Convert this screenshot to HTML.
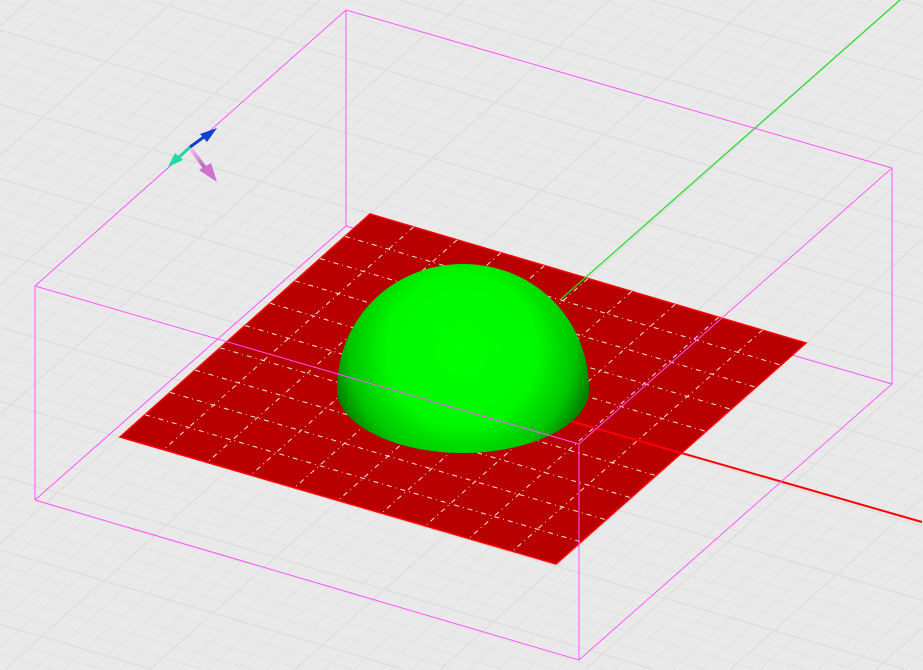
<!DOCTYPE html>
<html><head><meta charset="utf-8"><style>
html,body{margin:0;padding:0;background:#e9e9e9;overflow:hidden;width:923px;height:670px}
svg{display:block;position:absolute;left:0;top:0}
</style></head><body>
<svg id="s" width="923" height="670" viewBox="0 0 923 670" xmlns="http://www.w3.org/2000/svg" overflow="hidden">
<defs>
<radialGradient id="g" cx="462" cy="350" r="138" gradientUnits="userSpaceOnUse">
<stop offset="0" stop-color="#00ff00"/>
<stop offset="0.55" stop-color="#00f800"/>
<stop offset="0.82" stop-color="#00c400"/>
<stop offset="1" stop-color="#006e00"/>
</radialGradient>
<linearGradient id="pk" x1="0" y1="0" x2="1" y2="1"><stop offset="0" stop-color="#f4c0f0"/><stop offset="1" stop-color="#b060b0"/></linearGradient>
</defs>
<rect width="923" height="670" fill="#e9e9e9"/>
<g id="bg" stroke="#dedede" stroke-width="0.7"></g>
<g stroke="#ff55ff" stroke-width="1" fill="none">
<line x1="346" y1="10" x2="346" y2="226"/>
<line x1="346" y1="226" x2="35" y2="500"/>
<line x1="346" y1="226" x2="892" y2="384"/>
</g>
<polygon points="370,214 806,343 556,564 120,437" fill="#b80000" stroke="#ff0000" stroke-width="1.5"/>
<g id="pg" stroke="#ffffff" stroke-width="1" stroke-dasharray="5,4,1,4" opacity="0.9"></g>
<line x1="560" y1="300" x2="900" y2="0" stroke="#22dd22" stroke-width="1.2"/>
<line x1="570" y1="421" x2="922" y2="522" stroke="#ff0000" stroke-width="2"/>
<path d="M337,390 C337,318 393,264 463,264 C533,264 589,318 589,390 C589,425 530,453 463,453 C396,453 337,425 337,390 Z" fill="url(#g)"/>
<g stroke="#ff55ff" stroke-width="1" fill="none">
<polyline points="35,500 35,286 346,10 892,168 892,384 579,660 35,500"/>
<line x1="35" y1="286" x2="579" y2="444"/>
<line x1="579" y1="444" x2="892" y2="168"/>
<line x1="579" y1="444" x2="579" y2="660"/>
</g>
<g>
<line x1="190" y1="147" x2="208" y2="134" stroke="#1040c0" stroke-width="3"/>
<polygon points="217,128 200,134 207,142" fill="#1040d0"/>
<line x1="190" y1="147" x2="178" y2="158" stroke="#30d0a0" stroke-width="3"/>
<polygon points="168,167 175,153 183,160" fill="#20d8a8"/>
<line x1="191" y1="149" x2="205" y2="168" stroke="url(#pk)" stroke-width="4"/>
<polygon points="217,182 199,170 211,163" fill="#d070d0"/>
</g>
</svg>
<script>
(function(){
var ns="http://www.w3.org/2000/svg";
var W=922,H=669;
function clip(x1,y1,x2,y2){
 var dx=x2-x1,dy=y2-y1,t0=0,t1=1;
 var p=[-dx,dx,-dy,dy],q=[x1,W-x1,y1,H-y1];
 for(var i=0;i<4;i++){
  if(p[i]==0){if(q[i]<0)return null;}
  else{var r=q[i]/p[i];if(p[i]<0){if(r>t1)return null;if(r>t0)t0=r;}else{if(r<t0)return null;if(r<t1)t1=r;}}
 }
 return [x1+t0*dx,y1+t0*dy,x1+t1*dx,y1+t1*dy];
}
function L(g,x1,y1,x2,y2,w){var c=clip(x1,y1,x2,y2);if(!c)return;var l=document.createElementNS(ns,"line");l.setAttribute("x1",c[0]);l.setAttribute("y1",c[1]);l.setAttribute("x2",c[2]);l.setAttribute("y2",c[3]);if(w)l.setAttribute("stroke-width",w);g.appendChild(l);}
var bg=document.getElementById("bg");
var ux=21.8,uy=6.45,vx=-12.5,vy=11.15,ox=370,oy=214;
for(var i=-60;i<=60;i++){
 var w=(i%5==0)?1.5:null;
 var px=ox+i*vx,py=oy+i*vy;
 L(bg,px-60*ux,py-60*uy,px+60*ux,py+60*uy,w);
 var qx=ox+i*ux,qy=oy+i*uy;
 L(bg,qx-80*vx,qy-80*vy,qx+80*vx,qy+80*vy,w);
}
var pg=document.getElementById("pg");
var A=[370,214],B=[806,343],D=[120,437],C=[556,564];
for(var k=1;k<10;k++){
 var t=k/10;
 L(pg,A[0]+(D[0]-A[0])*t,A[1]+(D[1]-A[1])*t,B[0]+(C[0]-B[0])*t,B[1]+(C[1]-B[1])*t);
 L(pg,A[0]+(B[0]-A[0])*t,A[1]+(B[1]-A[1])*t,D[0]+(C[0]-D[0])*t,D[1]+(C[1]-D[1])*t);
}
})();
</script>
</body></html>
